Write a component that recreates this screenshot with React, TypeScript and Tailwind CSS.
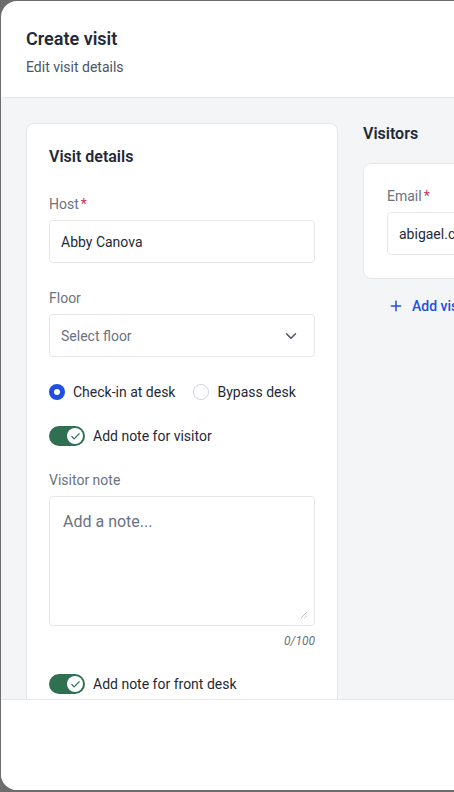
import React from 'react'
import { ChevronDown, Check, Plus } from 'lucide-react'

// -------------------------------------------------------
// Small form pieces
// -------------------------------------------------------

function Label({ text, required }: { text: string; required?: boolean }) {
    return (
        <div className="flex items-center gap-0.5 text-sm leading-5 text-[#6b7280]">
            <span>{text}</span>
            {required && <span className="text-[#c8305f]">*</span>}
        </div>
    )
}

function Toggle({ label }: { label: string }) {
    return (
        <div className="flex items-center gap-2 h-5">
            <span className="relative inline-block w-9 h-5 rounded-full bg-[#2f6f52] shrink-0">
                <span className="absolute right-[2px] top-[2px] w-4 h-4 rounded-full bg-white flex items-center justify-center">
                    <Check size={11} strokeWidth={2.5} className="text-[#2f6f52]" />
                </span>
            </span>
            <span className="text-sm text-[#1f2937]">{label}</span>
        </div>
    )
}

function Radio({ label, checked }: { label: string; checked?: boolean }) {
    return (
        <div className="flex items-center gap-2">
            {checked ? (
                <span className="w-4 h-4 rounded-full bg-[#1f4fe0] flex items-center justify-center shrink-0">
                    <span className="w-1.5 h-1.5 rounded-full bg-white" />
                </span>
            ) : (
                <span className="w-4 h-4 rounded-full border border-[#d1d5db] bg-white shrink-0" />
            )}
            <span className="text-sm text-[#1f2937]">{label}</span>
        </div>
    )
}

// -------------------------------------------------------
// Main component
// -------------------------------------------------------

export default function App() {
    return (
        <div
            className="w-[454px] h-[792px] overflow-hidden bg-[#6d6d6d] pt-px pl-px"
            style={{ fontFamily: 'Roboto, "Noto Sans", sans-serif' }}
        >
            <div className="w-[720px] h-[789px] bg-white rounded-l-2xl flex flex-col overflow-hidden">
                {/* Header */}
                <div className="px-6 pt-[26px] pb-5 border-b border-[#e5e7eb] ml-px">
                    <div className="text-lg leading-6 font-semibold text-[#1f2937]">Create visit</div>
                    <div className="mt-1.5 text-sm leading-5 text-[#4b5563]">Edit visit details</div>
                </div>

                {/* Body */}
                <div className="flex-1 overflow-hidden bg-[#f4f5f7] px-[25px] pt-[25px] flex items-start gap-[25px]">
                    {/* Visit details card */}
                    <div className="w-[312px] shrink-0 bg-white border border-[#e5e7eb] rounded-lg px-[22px] pt-[21px] pb-8">
                        <div className="text-base leading-6 font-semibold text-[#1f2937]">Visit details</div>

                        <div className="mt-[25px]">
                            <Label text="Host" required />
                            <div className="mt-1.5 h-[43px] border border-[#e5e7eb] rounded flex items-center px-[11px] text-sm text-[#1f2937]">
                                Abby Canova
                            </div>
                        </div>

                        <div className="mt-[25px]">
                            <Label text="Floor" />
                            <div className="mt-1.5 h-[43px] border border-[#e5e7eb] rounded flex items-center justify-between pl-[11px] pr-[14px] text-sm text-[#6b7280]">
                                <span>Select floor</span>
                                <ChevronDown size={18} className="text-[#4b5563]" />
                            </div>
                        </div>

                        <div className="mt-[25px] flex items-center gap-[18px]">
                            <Radio label="Check-in at desk" checked />
                            <Radio label="Bypass desk" />
                        </div>

                        <div className="mt-6">
                            <Toggle label="Add note for visitor" />
                        </div>

                        <div className="mt-6">
                            <Label text="Visitor note" />
                            <div className="relative mt-1.5 h-[130px] border border-[#e5e7eb] rounded px-[13px] pt-[13px] text-base text-[#6b7280]">
                                Add a note...
                                <svg className="absolute right-[6px] bottom-[6px]" width="8" height="8" viewBox="0 0 8 8">
                                    <path d="M1 7L7 1M4.5 7L7 4.5" stroke="#c4c4c4" strokeWidth="1" />
                                </svg>
                            </div>
                            <div className="mt-[7px] text-right text-xs leading-4 italic text-[#6b7280]">0/100</div>
                        </div>

                        <div className="mt-[25px]">
                            <Toggle label="Add note for front desk" />
                        </div>
                    </div>

                    {/* Visitors column */}
                    <div className="w-[340px] shrink-0 -mt-px">
                        <div className="text-base leading-6 font-semibold text-[#1f2937]">Visitors</div>
                        <div className="mt-[17px] bg-white border border-[#e5e7eb] rounded-lg px-[23px] pt-[22px] pb-[23px]">
                            <Label text="Email" required />
                            <div className="mt-1.5 h-[43px] border border-[#e5e7eb] rounded flex items-center px-[11px] text-sm text-[#1f2937]">
                                abigael.canova@example.com
                            </div>
                        </div>
                        <div className="mt-[17px] ml-[25px] flex items-center gap-2 text-sm font-medium text-[#1f4fe0]">
                            <Plus size={16} strokeWidth={2.25} />
                            <span>Add visitor</span>
                        </div>
                    </div>
                </div>

                {/* Footer */}
                <div className="h-[91px] shrink-0 border-t border-[#e5e7eb] bg-white" />
            </div>
        </div>
    )
}
